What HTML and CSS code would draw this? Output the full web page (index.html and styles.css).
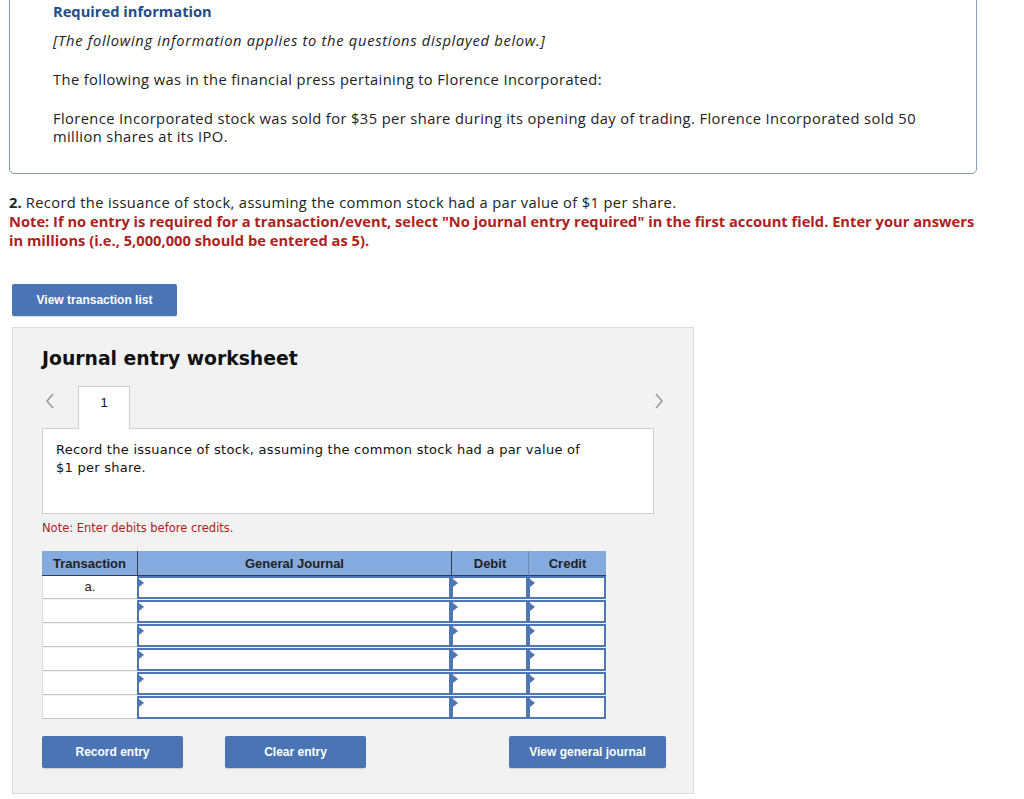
FILE: index.html
```html
<!DOCTYPE html>
<html lang="en">
<head>
<meta charset="utf-8">
<title>Journal entry worksheet</title>
<link rel="stylesheet" href="styles.css">
</head>
<body>
<div class="info">
  <p class="info-title">Required information</p>
  <p class="info-italic">[The following information applies to the questions displayed below.]</p>
  <p class="info-p">The following was in the financial press pertaining to Florence Incorporated:</p>
  <p class="info-p last">Florence Incorporated stock was sold for $35 per share during its opening day of trading. Florence Incorporated sold 50 million shares at its IPO.</p>
</div>

<div class="question">
  <p class="q-line"><b>2.</b> Record the issuance of stock, assuming the common stock had a par value of $1 per share.</p>
  <p class="note">Note: If no entry is required for a transaction/event, select "No journal entry required" in the first account field. Enter your answers in millions (i.e., 5,000,000 should be entered as 5).</p>
</div>

<button class="btn btn-list">View transaction list</button>

<div class="panel">
  <h2 class="ws-title">Journal entry worksheet</h2>
  <div class="tabrow">
    <span class="arrow"><svg width="10" height="16" viewBox="0 0 10 16"><polyline points="8,1 2,8 8,15" fill="none" stroke="#9a9a9a" stroke-width="1.6"/></svg></span>
    <span class="tab">1</span>
    <span class="spacer"></span>
    <span class="arrow"><svg width="10" height="16" viewBox="0 0 10 16"><polyline points="2,1 8,8 2,15" fill="none" stroke="#9a9a9a" stroke-width="1.6"/></svg></span>
  </div>
  <div class="desc">Record the issuance of stock, assuming the common stock had a par value of $1 per share.</div>
  <p class="ws-note">Note: Enter debits before credits.</p>

  <div class="jtable">
    <div class="th">Transaction</div>
    <div class="th dark">General Journal</div>
    <div class="th dark">Debit</div>
    <div class="th">Credit</div>

    <div class="tc">a.</div><div class="in"></div><div class="in"></div><div class="in"></div>
    <div class="tc"></div><div class="in"></div><div class="in"></div><div class="in"></div>
    <div class="tc"></div><div class="in"></div><div class="in"></div><div class="in"></div>
    <div class="tc"></div><div class="in"></div><div class="in"></div><div class="in"></div>
    <div class="tc"></div><div class="in"></div><div class="in"></div><div class="in"></div>
    <div class="tc"></div><div class="in"></div><div class="in"></div><div class="in"></div>
  </div>

  <div class="actions">
    <button class="btn btn-act">Record entry</button>
    <button class="btn btn-act">Clear entry</button>
    <span class="spacer"></span>
    <button class="btn btn-view">View general journal</button>
  </div>
</div>
</body>
</html>
```

FILE: styles.css
```css
* { box-sizing: border-box; }
html, body { margin: 0; padding: 0; background: #fff; }
body {
  font-family: "Open Sans", "Lato", sans-serif;
  font-size: 14.7px;
  color: #222;
  width: 1024px;
}
p { margin: 0; }

.info {
  margin: -10px 0 0 9px;
  width: 968px;
  border: 1px solid #8a9bbb;
  border-radius: 0 0 5px 5px;
  padding: 11px 44px 28px 43px;
  line-height: 18px;
}
.info-title { font-weight: 700; color: #1f4c8c; margin-bottom: 11px; }
.info-italic { font-style: italic; margin-bottom: 21px; letter-spacing: 0.7px; }
.info-p { margin-bottom: 21px; letter-spacing: 0.4px; }
.info-p.last { margin-bottom: 0; }

.question {
  margin: 19px 0 0 9px;
  width: 975px;
  line-height: 19px;
}
.q-line { letter-spacing: 0.36px; }
.question b { font-weight: 700; letter-spacing: 0; }
.note { color: #b0211c; font-weight: 700; }

.btn {
  border: none;
  border-radius: 2px;
  background: #4a74b4;
  color: #fff;
  font-family: "Liberation Sans", Arial, sans-serif;
  font-weight: 700;
  font-size: 12px;
  height: 32px;
  padding: 0;
  box-shadow: 0 1px 1px rgba(0,0,0,0.15);
}
.btn-list { display: block; margin: 34px 0 0 12px; width: 165px; }

.panel {
  margin: 11px 0 0 12px;
  width: 682px;
  background: #f2f2f2;
  border: 1px solid #dcdcdc;
  padding: 20px 0 25px 29px;
  font-family: "DejaVu Sans", Verdana, sans-serif;
}
.ws-title {
  margin: 0;
  font-size: 18.8px;
  line-height: 22px;
  font-weight: 700;
  color: #111;
}
.tabrow {
  display: flex;
  align-items: stretch;
  margin-top: 16px;
  width: 625px;
  height: 42px;
}
.arrow { display: flex; align-items: center; padding: 0 3px 0 3px; height: 29px; }
.arrow:first-child { width: 36px; }
.tab {
  width: 52px;
  background: #fff;
  border: 1px solid #cfcfcf;
  border-bottom: none;
  margin-bottom: -1px;
  position: relative;
  z-index: 1;
  text-align: center;
  font-family: "Liberation Sans", Arial, sans-serif;
  font-size: 13px;
  padding-top: 8px;
  color: #111;
}
.spacer { flex: 1; }

.desc {
  width: 612px;
  height: 86px;
  background: #fff;
  border: 1px solid #cfcfcf;
  padding: 12px 60px 12px 13px;
  font-size: 13px;
  letter-spacing: 0.26px;
  line-height: 18px;
  color: #111;
}
.ws-note {
  margin-top: 5px;
  color: #b0211c;
  font-size: 11.5px;
  line-height: 18px;
}

.jtable {
  margin-top: 14px;
  width: 564px;
  display: grid;
  grid-template-columns: 95px 314px 77px 78px;
  grid-auto-rows: 24px;
  font-family: "Liberation Sans", Arial, sans-serif;
  font-size: 13px;
}
.th {
  background: #84aadf;
  font-weight: 700;
  color: #222;
  display: flex;
  align-items: center;
  justify-content: center;
  border-bottom: 1px solid #2f3d52;
  border-left: 1px solid #6d88b0;
  height: 25px;
}
.th:first-child { border-left: none; }
.th.dark { border-left-color: #2f3d52; }
.tc {
  background: #fff;
  border-bottom: 1px solid #c4c4c4;
  border-left: 1px solid #dedede;
  text-align: center;
  line-height: 22px;
  color: #222;
  margin-top: 1px;
}
.in {
  position: relative;
  background: #fff;
  border: 2px solid #4e77b4;
  margin-top: 1px;
}
.in::before {
  content: "";
  position: absolute;
  left: 0;
  top: 1px;
  border-top: 4px solid transparent;
  border-bottom: 4px solid transparent;
  border-left: 5px solid #4e77b4;
}

.actions {
  display: flex;
  margin-top: 17px;
  width: 624px;
}
.btn-act { width: 141px; margin-right: 42px; }
.btn-view { width: 157px; }
```
